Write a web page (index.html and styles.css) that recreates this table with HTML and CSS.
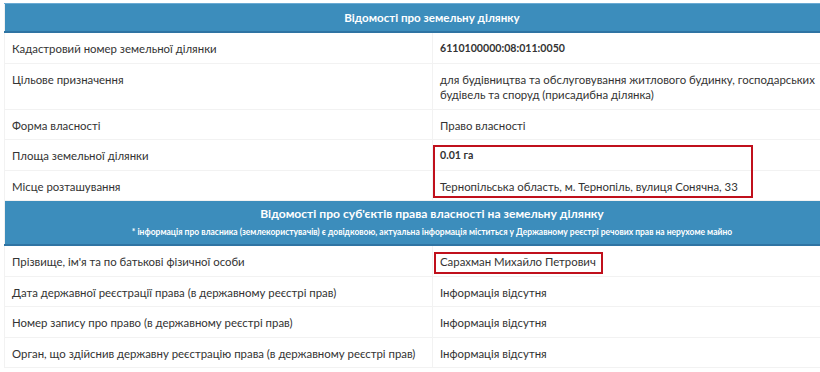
FILE: index.html
```html
<!DOCTYPE html>
<html lang="uk">
<head>
<meta charset="utf-8">
<link rel="stylesheet" href="styles.css">
</head>
<body>
<div class="wrap">
  <table class="info">
    <colgroup><col class="c-label"><col class="c-value"></colgroup>
    <tr class="head"><th colspan="2">Відомості про земельну ділянку</th></tr>
    <tr><td>Кадастровий номер земельної ділянки</td><td class="strong">6110100000:08:011:0050</td></tr>
    <tr><td>Цільове призначення</td><td>для будівництва та обслуговування житлового будинку, господарських будівель та споруд (присадибна ділянка)</td></tr>
    <tr><td>Форма власності</td><td>Право власності</td></tr>
    <tr><td>Площа земельної ділянки</td><td class="strong">0.01 га</td></tr>
    <tr><td>Місце розташування</td><td>Тернопільська область, м. Тернопіль, вулиця Сонячна, 33</td></tr>
    <tr class="head head2"><th colspan="2">Відомості про суб'єктів права власності на земельну ділянку<div class="note">* інформація про власника (землекористувачів) є довідковою, актуальна інформація міститься у Державному реєстрі речових прав на нерухоме майно</div></th></tr>
    <tr><td>Прізвище, ім'я та по батькові фізичної особи</td><td>Сарахман Михайло Петрович</td></tr>
    <tr><td>Дата державної реєстрації права (в державному реєстрі прав)</td><td>Інформація відсутня</td></tr>
    <tr><td>Номер запису про право (в державному реєстрі прав)</td><td>Інформація відсутня</td></tr>
    <tr><td>Орган, що здійснив державну реєстрацію права (в державному реєстрі прав)</td><td>Інформація відсутня</td></tr>
  </table>
  <div class="mark mark-area"></div>
  <div class="mark mark-name"></div>
</div>
</body>
</html>
```

FILE: styles.css
```css
html, body {
  margin: 0;
  padding: 0;
  background: #fff;
}
body {
  font-family: Lato, Roboto, "Noto Sans", sans-serif;
  font-size: 11.4px;
  color: #333;
  overflow: hidden;
}
.wrap {
  position: relative;
  margin: 3px 0 0 4px;
  width: 856px;
}
.info {
  border-collapse: collapse;
  width: 856px;
  border: 1px solid #f0f0f0;
}
.c-label { width: 428px; }
.info td {
  padding: 8px 8px 6px 7px;
  line-height: 15.5px;
  border: 1px solid #f2f2f2;
  vertical-align: top;
  text-align: left;
}
.info td + td { padding-left: 7px; }
.strong { font-weight: 700; font-size: 10.6px; }
.head th {
  background: #3c8dbc;
  color: #fff;
  font-weight: 700;
  font-size: 11.6px;
  text-align: center;
  padding: 6px 8px 5px;
  line-height: 16px;
  border-top: 1px solid #6aaad3;
  border-bottom: 2px solid #2f74a3;
}
.head2 th {
  padding: 5px 8px 6px;
  font-size: 12.1px;
}
.note {
  font-size: 8.5px;
  line-height: 12px;
  margin-top: 4px;
}
.mark {
  position: absolute;
  border: 2px solid #c0101c;
  box-sizing: border-box;
}
.mark-area {
  left: 429px;
  top: 142px;
  width: 320px;
  height: 53px;
}
.mark-name {
  left: 430px;
  top: 249px;
  width: 169px;
  height: 22px;
}
```
